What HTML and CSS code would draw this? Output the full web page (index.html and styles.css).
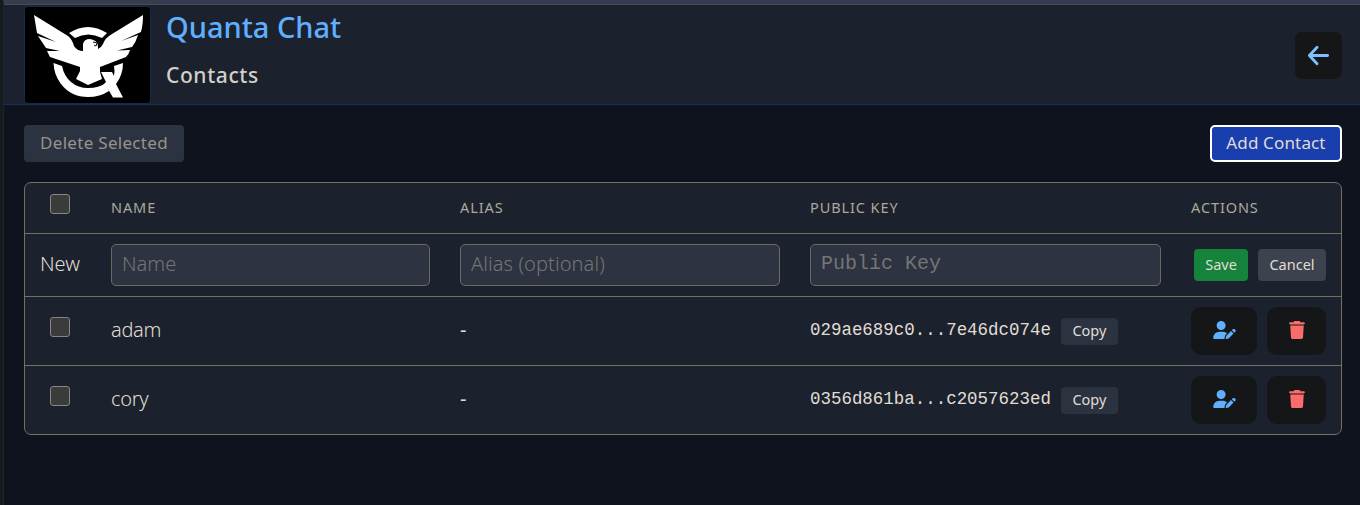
FILE: index.html
```
<!DOCTYPE html>
<html lang="en">
<head>
<meta charset="utf-8">
<title>Quanta Chat - Contacts</title>
<link rel="stylesheet" href="styles.css">
</head>
<body>
<svg class="defs" width="0" height="0">
  <symbol id="user-pen" viewBox="0 0 640 512"><path d="M224 256A128 128 0 1 0 224 0a128 128 0 1 0 0 256zm-45.700 48C79.800 304 0 383.800 0 482.300C0 498.700 13.300 512 29.700 512l293.100 0c-3.100-8.800-3.700-18.400-1.400-27.800l15-60.100c2.800-11.300 8.600-21.500 16.800-29.700l40.300-40.300c-32.100-31-75.700-50.100-123.900-50.100l-91.300 0zm435.500-68.300c-15.600-15.600-40.900-15.600-56.600 0l-29.400 29.400 71 71 29.400-29.400c15.600-15.600 15.600-40.900 0-56.600l-14.400-14.400zM375.900 417c-4.100 4.100-7 9.200-8.400 14.900l-15 60.100c-1.400 5.500 .2 11.200 4.200 15.200s9.700 5.600 15.200 4.200l60.100-15c5.600-1.400 10.800-4.300 14.900-8.400L576.100 358.700l-71-71L375.900 417z"/></symbol>
  <symbol id="trash" viewBox="0 0 448 512"><path d="M135.200 17.700L128 32 32 32C14.300 32 0 46.300 0 64S14.300 96 32 96l384 0c17.700 0 32-14.300 32-32s-14.300-32-32-32l-96 0-7.200-14.300C307.400 6.800 296.300 0 284.200 0L163.800 0c-12.100 0-23.200 6.800-28.600 17.700zM416 128L32 128 53.200 467c1.600 25.300 22.600 45 47.900 45l245.800 0c25.300 0 46.300-19.700 47.900-45L416 128z"/></symbol>
</svg>
<div class="app">
  <header class="header">
    <svg class="logo" viewBox="0 0 125 96">
      <path class="ring" d="M28.500 56L37 59Q39 69 46 75 53 81 63 81 74 81 81 76L84 84Q75 90 63 90 46 90 36 77 29 68 28.500 56Z"/>
      <path class="ring" d="M89 59L98 56Q98 68 91 77L98 90.500H88L83 82 77 86 76 80 81 75 76 65H87L89 69Q90 64 89 59Z"/>
      <path class="ring" d="M44 26Q63 14 82 26L77 31Q63 24 50 31Z"/>
      <path class="ring" d="M9 8L43 29Q47 32 49 39Q52 44 58 44V37Q59 32 65 32Q73 33 73 40V42Q76 41 78 37Q80 31 87 27L118 8Q118 18 116 25L96 34 113 28Q111 35 107 40L92 43.500 105 43Q104 47 101 50L75 60V65L77 72 63 78 51 72 55 64V60L25 50 22 44 35 44 21 41 13 29 31 35 12 26Z"/>
      <path class="eye" d="M68 35l4 1-1 3-2-1"/>
    </svg>
    <div class="titles">
      <h1>Quanta Chat</h1>
      <h2>Contacts</h2>
    </div>
    <button class="back" aria-label="Back"><svg viewBox="0 0 24 24"><path d="M10.500 3.500L2.500 12l8 8.500M3 12H21.500"/></svg></button>
  </header>
  <main>
    <div class="toolbar">
      <button class="delete"><span>Delete Selected</span></button>
      <button class="add"><span>Add Contact</span></button>
    </div>
    <section class="table">
      <div class="row head">
        <div class="cell center"><i class="check"></i></div>
        <div class="cell">NAME</div><div class="cell">ALIAS</div><div class="cell pk">PUBLIC KEY</div><div class="cell act">ACTIONS</div>
      </div>
      <div class="row new">
        <div class="cell label">New</div>
        <div class="cell"><input placeholder="Name"></div>
        <div class="cell"><input class="opt" placeholder="Alias (optional)"></div>
        <div class="cell"><input class="mono" placeholder="Public Key"></div>
        <div class="cell actions end"><button class="small save">Save</button><button class="small cancel">Cancel</button></div>
      </div>
      <div class="row contact">
        <div class="cell center"><i class="check"></i></div>
        <div class="cell name">adam</div><div class="cell dash">-</div>
        <div class="cell key"><code>029ae689c0...7e46dc074e</code><button class="copy">Copy</button></div>
        <div class="cell actions"><button class="icon edit" aria-label="Edit"><svg><use href="#user-pen"/></svg></button><button class="icon remove" aria-label="Delete"><svg><use href="#trash"/></svg></button></div>
      </div>
      <div class="row contact last">
        <div class="cell center"><i class="check"></i></div>
        <div class="cell name">cory</div><div class="cell dash">-</div>
        <div class="cell key"><code>0356d861ba...c2057623ed</code><button class="copy">Copy</button></div>
        <div class="cell actions"><button class="icon edit" aria-label="Edit"><svg><use href="#user-pen"/></svg></button><button class="icon remove" aria-label="Delete"><svg><use href="#trash"/></svg></button></div>
      </div>
    </section>
  </main>
</div>
</body>
</html>
```

FILE: styles.css
```
* { box-sizing: border-box; }
body { margin: 0; height: 505px; overflow: hidden; background: #0f131e; color: #e0dcd5; font-family: "Noto Sans", "Open Sans", sans-serif; border-left: 3px solid #1a1a1a; }
button { border: 0; padding: 0; font-family: inherit; color: inherit; display: flex; align-items: center; justify-content: center; white-space: nowrap; }
.defs { display: none; }
.app { height: 505px; border-left: 1px solid #14233e; border-top: 4px solid #363d50; }
.header { height: 101px; border-top: 1px solid #4b4b50; border-bottom: 1px solid #15305a; background: #1b222d; padding: 1px 18px 0 20px; display: flex; }
.logo { width: 127px; height: 98px; background: #000; border: 1px solid #112c50; border-radius: 4px; }
.ring { fill: #fff; }
.eye { fill: none; stroke: #111; stroke-width: 1; }
.titles { margin-left: 15px; flex: 1; }
h1, h2 { margin: 0; font-weight: 500; white-space: nowrap; }
h1 { font-size: 29px; line-height: 42px; color: #60affe; }
h2 { font-size: 21px; line-height: 30px; margin-top: 12px; color: #d4cfc8; letter-spacing: .6px; }
.back { width: 47px; height: 47px; margin-top: 26px; border-radius: 7px; background: #141617; }
.back svg { width: 25px; height: 23px; fill: none; stroke: #7cc0ff; stroke-width: 3; stroke-linecap: round; stroke-linejoin: round; }
main { padding: 20px 18px 0 20px; }
.toolbar { display: flex; justify-content: space-between; height: 37px; margin-bottom: 20px; }
.delete, .add { height: 37px; border-radius: 4px; font-size: 17px; padding-bottom: 2px; }
.delete { width: 160px; background: #2c3340; color: #9b928a; letter-spacing: .3px; }
.add { width: 132px; background: #183fad; border: 2px solid #fff; border-radius: 5px; color: #e0dcd5; letter-spacing: .15px; }
.table { height: 253px; border: 1px solid #746e63; border-radius: 7px; background: #1b222d; overflow: hidden; }
.row { display: grid; grid-template-columns: 71px 349px 350px 381px 165px; border-bottom: 1px solid #746e63; }
.row.last { border-bottom: 0; }
.head { height: 51px; font-size: 14.5px; letter-spacing: .9px; color: #aea79c; }
.new { height: 63px; }
.contact { height: 69px; }
.last { height: 68px; }
.new, .contact { font-size: 20px; font-weight: 300; }
.cell { padding: 0 15px; display: flex; align-items: center; min-width: 0; }
.head .cell { padding-bottom: 2px; }
.label, .name { padding-bottom: 3px; }
.name { letter-spacing: -.3px; }
.dash { padding-bottom: 4px; font-weight: 400; }
.cell.center { justify-content: flex-start; padding: 0 0 8px 25px; }
.head .cell.center { padding-bottom: 9px; }
.check { width: 20px; height: 20px; background: #3b3b3b; border: 1px solid #858585; border-radius: 3px; }
input { width: 100%; height: 42px; padding: 0 10px 3px; border: 1px solid #6f685e; border-radius: 5px; background: #2d3340; font-family: inherit; font-weight: 300; font-size: 20px; }
input::placeholder { color: #757575; opacity: 1; }
input.opt { letter-spacing: .1px; }
input.mono { font-family: "Liberation Mono", monospace; font-weight: 400; padding-bottom: 4px; }
.actions { gap: 10px; }
.end { justify-content: flex-end; }
.small { height: 32px; border-radius: 4px; font-size: 14.5px; padding-bottom: 2px; }
.save { width: 54px; background: #15833b; }
.cancel { width: 68px; background: #3c434e; }
.key { gap: 10px; }
code { font: 400 17.47px "Liberation Mono", monospace; margin-bottom: 2px; }
.copy { width: 57px; height: 27px; border-radius: 4px; margin-top: 1px; padding-bottom: 3px; background: #2c3340; font-size: 14.5px; }
.icon { height: 48px; border-radius: 10px; background: #141617; padding-bottom: 2px; }
.edit { width: 66px; color: #60affe; }
.remove { width: 59px; color: #fa6c6c; }
.icon svg { height: 18px; width: 23px; fill: currentColor; }
.remove svg { width: 16px; }
```
